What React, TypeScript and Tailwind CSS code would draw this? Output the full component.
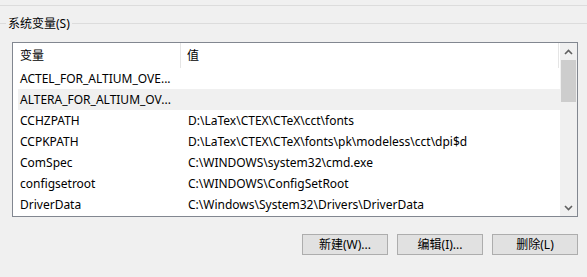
const rows: Array<{ name: string; value: string; selected?: boolean }> = [
  { name: "ACTEL_FOR_ALTIUM_OVE...", value: "" },
  { name: "ALTERA_FOR_ALTIUM_OV...", value: "", selected: true },
  { name: "CCHZPATH", value: "D:\\LaTex\\CTEX\\CTeX\\cct\\fonts" },
  { name: "CCPKPATH", value: "D:\\LaTex\\CTEX\\CTeX\\fonts\\pk\\modeless\\cct\\dpi$d" },
  { name: "ComSpec", value: "C:\\WINDOWS\\system32\\cmd.exe" },
  { name: "configsetroot", value: "C:\\WINDOWS\\ConfigSetRoot" },
  { name: "DriverData", value: "C:\\Windows\\System32\\Drivers\\DriverData" },
];

const font = "font-['Noto_Sans','Noto_Sans_CJK_SC',sans-serif]";

export default function App() {
  return (
    <div className={`h-[277px] w-[587px] overflow-hidden bg-[#f0f0f0] text-[12px] text-black ${font}`}>
      <div className="mt-[5px] h-px bg-[#dcdcdc]" />

      <div className="mt-[10px] flex h-[15px] items-center">
        <div className="h-px w-[6px] bg-[#dcdcdc]" />
        <span className="px-[2px] leading-[15px]">系统变量(S)</span>
        <div className="h-px flex-1 bg-[#dcdcdc]" />
      </div>

      <div className="ml-[12px] mt-[11px] flex h-[175px] w-[566px] border border-[#828790] bg-white">
        <div className="flex min-w-0 flex-1 flex-col overflow-hidden">
          <div className="flex h-[25px] shrink-0 items-stretch">
            <div className="flex w-[168px] items-center border-r border-[#e5e5e5] pl-[7px]">变量</div>
            <div className="flex w-[378px] items-center border-r border-[#e5e5e5] pl-[6px]">值</div>
          </div>
          {rows.map((r) => (
            <div
              key={r.name}
              className={`ml-[5px] flex h-[21px] shrink-0 items-center ${r.selected ? "bg-[#f0f0f0]" : ""}`}
            >
              <div className="w-[163px] overflow-hidden whitespace-nowrap pl-[2px]">{r.name}</div>
              <div className="whitespace-nowrap pl-[7px]">{r.value}</div>
            </div>
          ))}
        </div>

        <div className="flex w-[17px] shrink-0 flex-col bg-[#f0f0f0]">
          <div className="flex h-[17px] items-center justify-center">
            <svg viewBox="0 0 9 6" className="h-[6px] w-[9px]" fill="none" stroke="#606060" strokeWidth="1.6">
              <path d="M1 5 4.5 1.5 8 5" />
            </svg>
          </div>
          <div className="mx-[1px] h-[42px] bg-[#cdcdcd]" />
          <div className="flex-1" />
          <div className="flex h-[17px] items-center justify-center">
            <svg viewBox="0 0 9 6" className="h-[6px] w-[9px]" fill="none" stroke="#606060" strokeWidth="1.6">
              <path d="M1 1 4.5 4.5 8 1" />
            </svg>
          </div>
        </div>
      </div>

      <div className="mt-[17px] flex justify-end gap-[9px] pr-[9px]">
        <Button>新建(W)...</Button>
        <Button>编辑(I)...</Button>
        <Button>删除(L)</Button>
      </div>
    </div>
  );
}

function Button({ children }: { children: React.ReactNode }) {
  return (
    <div className="flex h-[21px] w-[86px] items-center justify-center border border-[#adadad] bg-[#e1e1e1]">
      {children}
    </div>
  );
}
